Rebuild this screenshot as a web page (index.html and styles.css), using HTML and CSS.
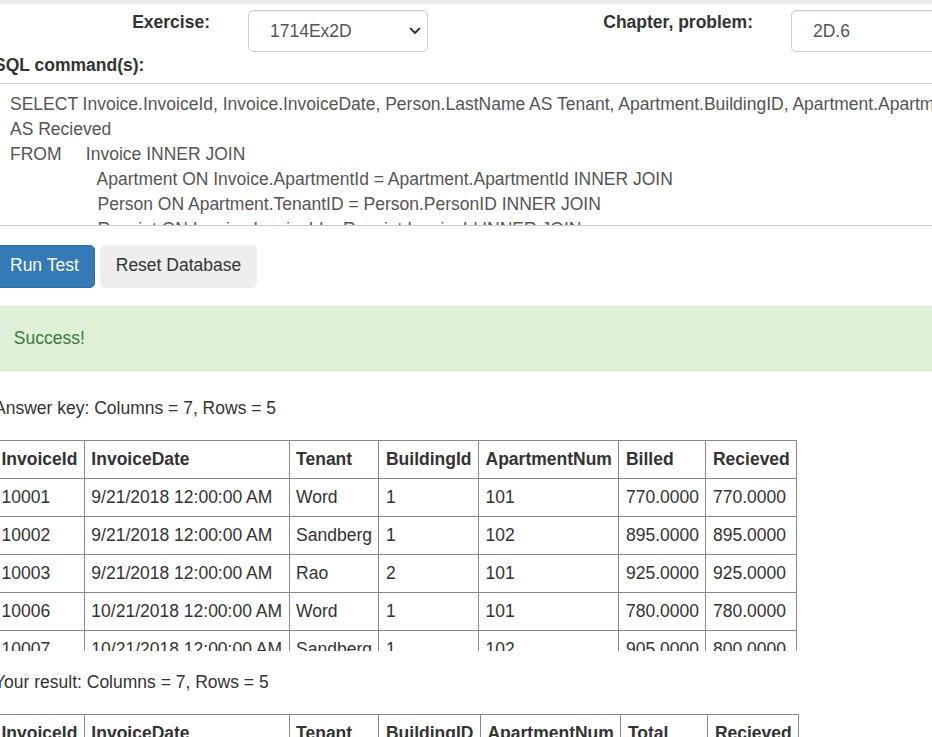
FILE: index.html
```
<!DOCTYPE html>
<html lang="en">
<head>
<meta charset="utf-8">
<title>SQL Test</title>
<link rel="stylesheet" href="styles.css">
</head>
<body>
<div class="topbar"></div>
<main class="page">
  <div class="picker-row">
    <label class="pick-label ex" for="ex">Exercise:</label>
    <div class="select-wrap">
      <select id="ex" class="form-select"><option>1714Ex2D</option></select>
      <svg class="chev" width="12" height="8" viewBox="0 0 12 8"><path d="M1.5 1.5 L6 6 L10.5 1.5" fill="none" stroke="#333" stroke-width="1.8" stroke-linecap="round" stroke-linejoin="round"/></svg>
    </div>
    <label class="pick-label ch" for="cp">Chapter, problem:</label>
    <input id="cp" class="form-input" value="2D.6">
  </div>
  <label class="sql-label" for="sql">SQL command(s):</label>
  <textarea id="sql" class="sql" wrap="off">SELECT Invoice.InvoiceId, Invoice.InvoiceDate, Person.LastName AS Tenant, Apartment.BuildingID, Apartment.ApartmentNum, Invoice.Total AS Billed, Receipt.Amount
AS Recieved
FROM     Invoice INNER JOIN
                  Apartment ON Invoice.ApartmentId = Apartment.ApartmentId INNER JOIN
                  Person ON Apartment.TenantID = Person.PersonID INNER JOIN
                  Receipt ON Invoice.InvoiceId = Receipt.InvoiceId INNER JOIN</textarea>
  <div class="actions">
    <button class="btn btn-primary">Run Test</button>
    <button class="btn btn-default">Reset Database</button>
  </div>
  <div class="alert">Success!</div>
  <p class="count">Answer key: Columns = 7, Rows = 5</p>
  <div class="table-box">
    <table class="grid">
      <thead>
        <tr><th>InvoiceId</th><th>InvoiceDate</th><th>Tenant</th><th>BuildingId</th><th>ApartmentNum</th><th>Billed</th><th>Recieved</th></tr>
      </thead>
      <tbody>
        <tr><td>10001</td><td>9/21/2018 12:00:00 AM</td><td>Word</td><td>1</td><td>101</td><td>770.0000</td><td>770.0000</td></tr>
        <tr><td>10002</td><td>9/21/2018 12:00:00 AM</td><td>Sandberg</td><td>1</td><td>102</td><td>895.0000</td><td>895.0000</td></tr>
        <tr><td>10003</td><td>9/21/2018 12:00:00 AM</td><td>Rao</td><td>2</td><td>101</td><td>925.0000</td><td>925.0000</td></tr>
        <tr><td>10006</td><td>10/21/2018 12:00:00 AM</td><td>Word</td><td>1</td><td>101</td><td>780.0000</td><td>780.0000</td></tr>
        <tr><td>10007</td><td>10/21/2018 12:00:00 AM</td><td>Sandberg</td><td>1</td><td>102</td><td>905.0000</td><td>800.0000</td></tr>
      </tbody>
    </table>
  </div>
  <p class="count">Your result: Columns = 7, Rows = 5</p>
  <div class="table-box">
    <table class="grid">
      <thead>
        <tr><th>InvoiceId</th><th>InvoiceDate</th><th>Tenant</th><th>BuildingID</th><th>ApartmentNum</th><th>Total</th><th>Recieved</th></tr>
      </thead>
      <tbody>
        <tr><td>10001</td><td>9/21/2018 12:00:00 AM</td><td>Word</td><td>1</td><td>101</td><td>770.0000</td><td>770.0000</td></tr>
        <tr><td>10002</td><td>9/21/2018 12:00:00 AM</td><td>Sandberg</td><td>1</td><td>102</td><td>895.0000</td><td>895.0000</td></tr>
        <tr><td>10003</td><td>9/21/2018 12:00:00 AM</td><td>Rao</td><td>2</td><td>101</td><td>925.0000</td><td>925.0000</td></tr>
        <tr><td>10006</td><td>10/21/2018 12:00:00 AM</td><td>Word</td><td>1</td><td>101</td><td>780.0000</td><td>780.0000</td></tr>
        <tr><td>10007</td><td>10/21/2018 12:00:00 AM</td><td>Sandberg</td><td>1</td><td>102</td><td>905.0000</td><td>800.0000</td></tr>
      </tbody>
    </table>
  </div>
</main>
</body>
</html>
```
FILE: styles.css
```
html, body {
  margin: 0;
  padding: 0;
  overflow: hidden;
  background: #fff;
}
body {
  font-family: "Liberation Sans", Arial, sans-serif;
  font-size: 17.5px;
  line-height: 25px;
  color: #333;
}
.topbar {
  height: 4px;
  background: #ececec;
}
.page {
  width: 1000px;
  margin-left: -6px;
}
.picker-row {
  display: flex;
  align-items: flex-start;
  margin-top: 6px;
  height: 42.5px;
}
.pick-label {
  font-weight: bold;
  text-align: right;
  line-height: 25px;
  box-sizing: border-box;
}
.pick-label.ex { width: 216px; }
.pick-label.ch { width: 325px; }
.select-wrap {
  position: relative;
  margin-left: 38px;
  width: 180px;
}
.form-select,
.form-input {
  box-sizing: border-box;
  height: 42px;
  border: 1px solid #ccc;
  border-radius: 5px;
  background: #fff;
  color: #555;
  font-family: inherit;
  font-size: 17.5px;
  padding: 0 10px 0 21px;
  margin: 0;
  box-shadow: inset 0 1px 1px rgba(0,0,0,0.06);
}
.form-select {
  width: 180px;
  appearance: none;
  -webkit-appearance: none;
}
.chev {
  position: absolute;
  right: 7px;
  top: 17px;
  pointer-events: none;
}
.form-input {
  margin-left: 38px;
  width: 200px;
}
.sql-label {
  display: block;
  font-weight: bold;
  line-height: 25px;
  margin-bottom: 5.5px;
}
.sql {
  display: block;
  box-sizing: border-box;
  width: 1000px;
  height: 143px;
  margin: 0;
  padding: 7.5px 15px;
  border: 1px solid #ccc;
  border-radius: 5px;
  font-family: inherit;
  font-size: 17.5px;
  line-height: 25px;
  color: #555;
  white-space: pre;
  overflow: hidden;
  resize: none;
  tab-size: 8;
}
.actions {
  display: flex;
  gap: 5px;
  margin-top: 19px;
}
.btn {
  box-sizing: border-box;
  height: 42.5px;
  padding: 0 15px 1px;
  border: 1px solid transparent;
  border-radius: 5px;
  font-family: inherit;
  font-size: 17.5px;
  line-height: 25px;
  cursor: pointer;
}
.btn-primary {
  background: #337ab7;
  border-color: #2e6da4;
  color: #fff;
}
.btn-default {
  background: #eeeeee;
  border-color: #eeeeee;
  color: #333;
}
.alert {
  margin-top: 18.5px;
  margin-bottom: 25px;
  padding: 18.75px;
  border: 1px solid #d6e9c6;
  border-radius: 5px;
  background: #dff0d8;
  color: #3c763d;
  line-height: 25px;
}
.count {
  margin: 0 0 19px;
  line-height: 25px;
}
.table-box {
  max-height: 211.5px;
  overflow: hidden;
  margin-bottom: 18.5px;
}
.grid {
  border-collapse: collapse;
  font-size: 17.5px;
  line-height: 25px;
}
.grid th,
.grid td {
  border: 1px solid #888;
  padding: 6px 6.5px;
  text-align: left;
  white-space: nowrap;
}
.grid th {
  font-weight: bold;
}
```
